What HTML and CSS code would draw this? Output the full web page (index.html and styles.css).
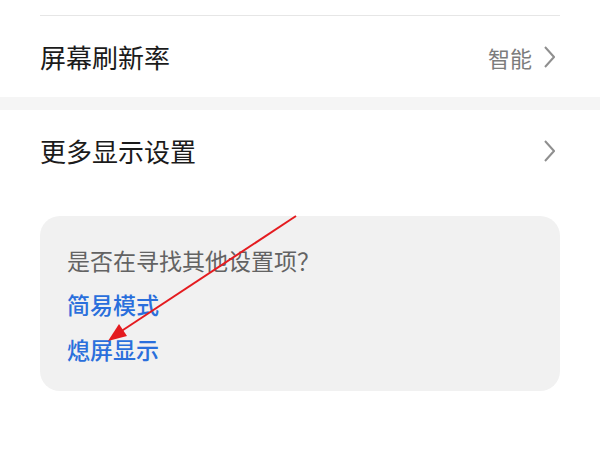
FILE: index.html
```html
<!DOCTYPE html>
<html lang="zh-CN">
<head>
    <meta charset="UTF-8">
    <meta name="viewport" content="width=device-width, initial-scale=1.0">
    <title>显示设置</title>
    <link rel="stylesheet" href="styles.css">
</head>
<body>
    <div class="page">
        <div class="divider"></div>

        <div class="row">
            <span class="row-title">屏幕刷新率</span>
            <span class="row-value">
                智能
                <svg class="chevron" viewBox="0 0 11 22" width="11" height="22">
                    <polyline points="1,1 10,11 1,21" />
                </svg>
            </span>
        </div>

        <div class="band"></div>

        <div class="row">
            <span class="row-title">更多显示设置</span>
            <span class="row-value">
                <svg class="chevron" viewBox="0 0 11 22" width="11" height="22">
                    <polyline points="1,1 10,11 1,21" />
                </svg>
            </span>
        </div>

        <div class="suggest">
            <div class="suggest-q">是否在寻找其他设置项？</div>
            <a class="suggest-link">简易模式</a>
            <a class="suggest-link">熄屏显示</a>
        </div>

        <!-- red annotation arrow drawn over the screenshot -->
        <svg class="annotation" viewBox="0 0 600 450" width="600" height="450">
            <line x1="296" y1="216" x2="120" y2="332" />
            <polygon points="108,341 127,336 119,324" />
        </svg>
    </div>
</body>
</html>
```

FILE: styles.css
```css
body {
    margin: 0;
    background: #fff;
    font-family: "Noto Sans CJK SC", "Noto Sans", sans-serif;
}
.page {
    position: relative;
    width: 600px;
    height: 450px;
    overflow: hidden;
}
.divider {
    height: 1px;
    margin: 15px 40px 0;
    background: #e6e6e6;
}
.row {
    height: 81px;
    padding: 0 45px 0 40px;
    display: flex;
    align-items: center;
    justify-content: space-between;
}
.row-title {
    font-size: 26px;
    color: #1b1b1b;
}
.row-value {
    display: flex;
    align-items: center;
    gap: 12px;
    font-size: 22px;
    color: #7c7c7c;
}
.chevron {
    display: block;
}
.chevron polyline {
    fill: none;
    stroke: #8f8f8f;
    stroke-width: 2;
}
.band {
    height: 13px;
    background: #f5f5f5;
}
.suggest {
    margin: 25px 40px 0;
    height: 175px;
    box-sizing: border-box;
    padding: 22px 27px 0;
    background: #f1f1f1;
    border-radius: 20px;
}
.suggest-q {
    font-size: 23px;
    line-height: 44px;
    color: #636363;
}
.suggest-link {
    display: block;
    font-size: 23px;
    font-weight: 500;
    line-height: 45px;
    color: #2a6fdc;
}
.annotation {
    position: absolute;
    left: 0;
    top: 0;
    pointer-events: none;
}
.annotation line {
    stroke: #e41b1f;
    stroke-width: 2;
}
.annotation polygon {
    fill: #e41b1f;
}
```
